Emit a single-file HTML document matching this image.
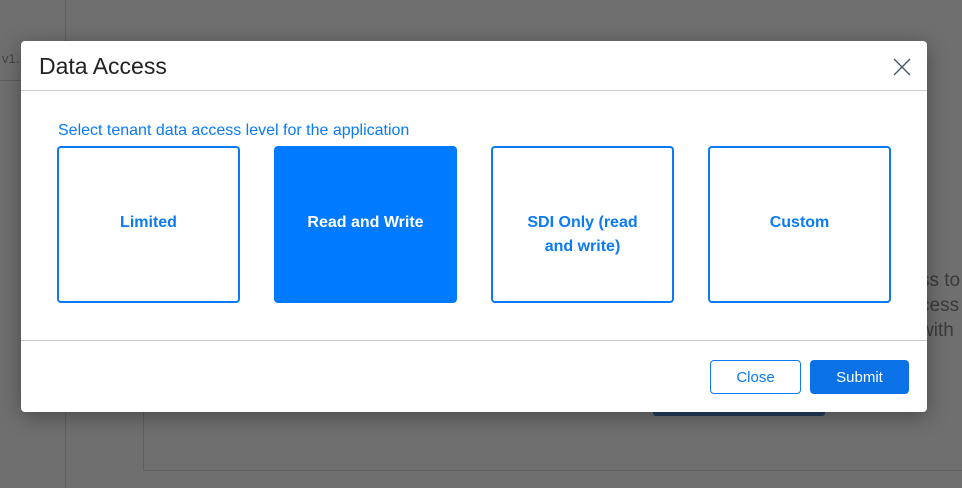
<!DOCTYPE html>
<html><head><style>
*{box-sizing:border-box;margin:0;padding:0}
body{width:962px;height:488px;background:#6f6f6f;position:relative;overflow:hidden;font-family:"Liberation Sans",sans-serif}
.abs{position:absolute}
.modal{left:21px;top:41px;width:906px;height:371px;background:#fff;border-radius:4px;box-shadow:0 4px 20px rgba(0,0,0,.35)}
.title{left:18px;top:12px;font-size:23px;color:#222}
.card{top:105px;width:183px;height:157px;border:2px solid #0a7bf2;border-radius:4px;padding-top:63px;text-align:center;font-weight:bold;font-size:16px;color:#0a7bf2;line-height:24px}
.btn{top:319px;height:34px;border-radius:4px;font-size:15px;display:flex;align-items:center;justify-content:center}
</style></head><body>
<div class="abs" style="left:65px;top:0;width:1px;height:488px;background:#5e5e5e"></div>
<div class="abs" style="left:0;top:80px;width:65px;height:1px;background:#5e5e5e"></div>
<div class="abs" style="left:2px;top:51px;font-size:13px;color:#444">v1.</div>
<div class="abs" style="left:143px;top:400px;width:1px;height:70px;background:#5e5e5e"></div>
<div class="abs" style="left:143px;top:470px;width:819px;height:1px;background:#5e5e5e"></div>
<div class="abs" style="left:653px;top:400px;width:172px;height:16px;background:#233d5e;border-radius:3px"></div>
<div class="abs" style="left:920px;top:268px;font-size:19px;color:#3a3a3a;line-height:25px">ss to<br>cess<br>with</div>
<div class="abs modal">
<div class="abs title">Data Access</div>
<svg class="abs" style="left:871px;top:16px" width="20" height="20" viewBox="0 0 20 20"><path d="M2 2L18 18M18 2L2 18" stroke="#3d5866" stroke-width="1.3"/></svg>
<div class="abs" style="left:0;top:49px;width:906px;height:1px;background:#d0d0d0"></div>
<div class="abs" style="left:37px;top:81px;font-size:16px;color:#0a7bf2">Select tenant data access level for the application</div>
<div class="abs card" style="left:36px">Limited</div>
<div class="abs card" style="left:253px;background:#007bff;border-color:#007bff;color:#fff">Read and Write</div>
<div class="abs card" style="left:470px">SDI Only (read<br>and write)</div>
<div class="abs card" style="left:687px">Custom</div>
<div class="abs" style="left:0;top:299px;width:906px;height:1px;background:#c8c8c8"></div>
<div class="abs btn" style="left:689px;width:91px;border:1px solid #0a7bf2;color:#0a7bf2">Close</div>
<div class="abs btn" style="left:789px;width:99px;background:#0a72e6;color:#fff">Submit</div>
</div>
</body></html>
